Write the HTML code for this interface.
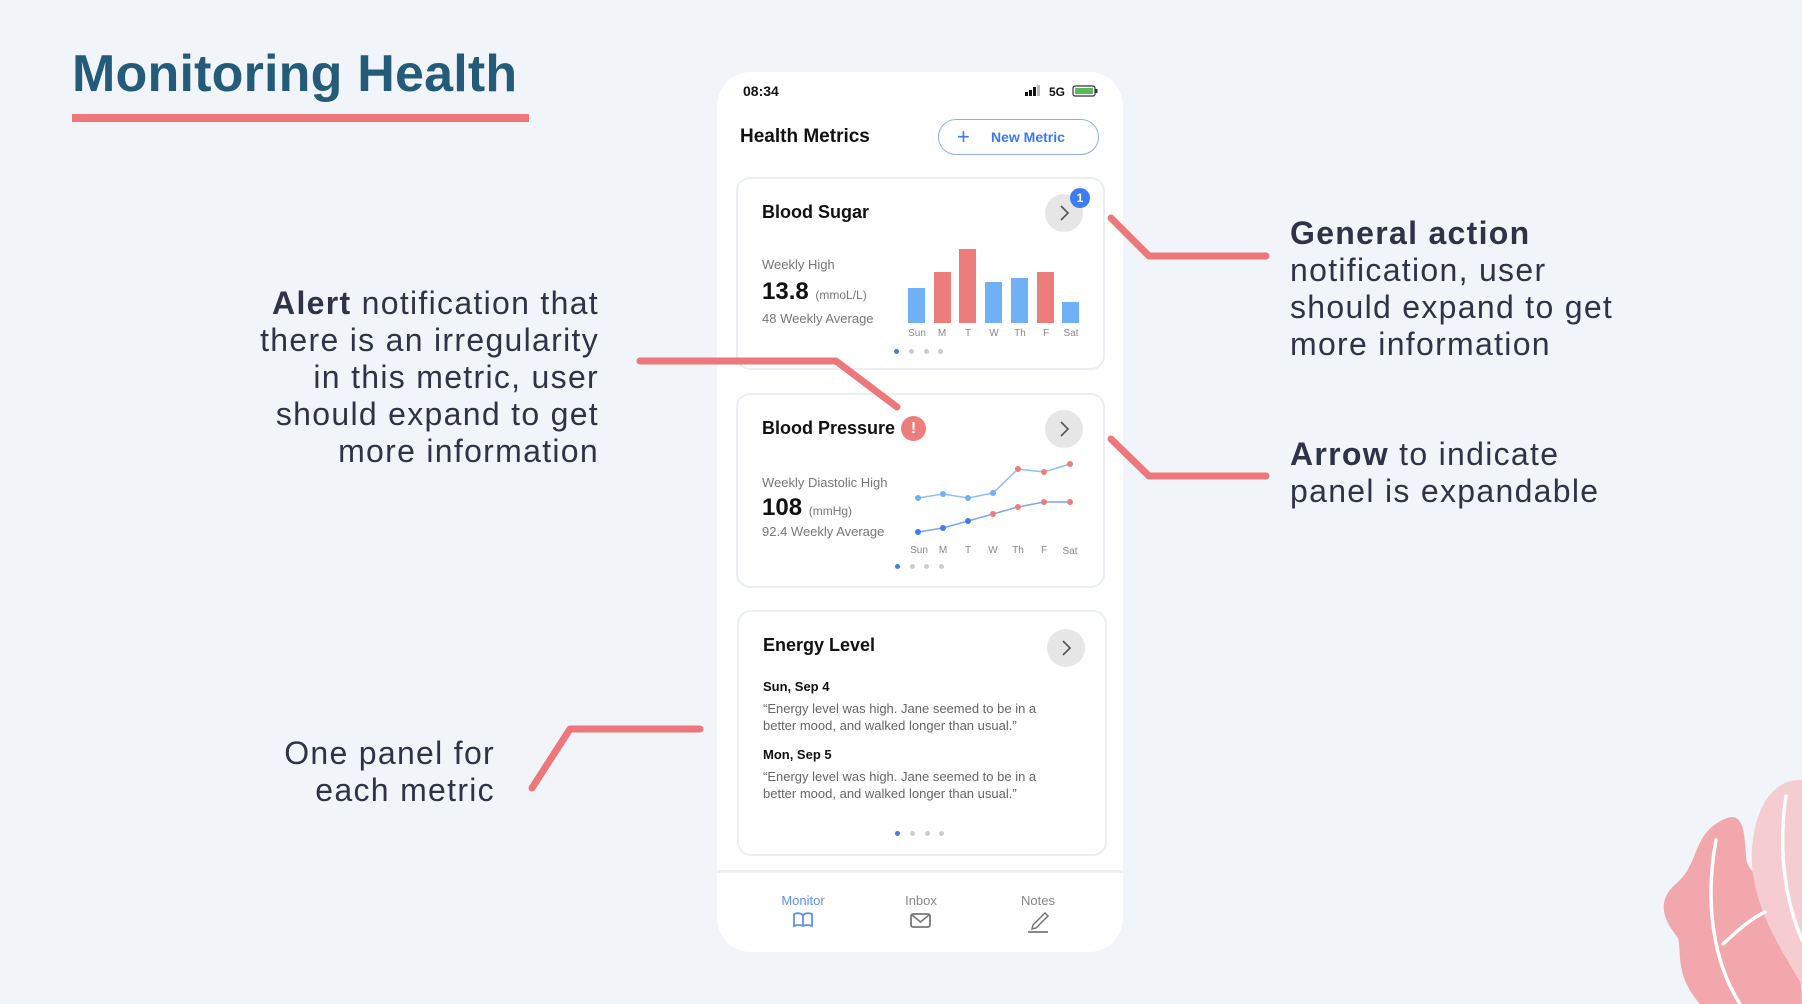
<!DOCTYPE html>
<html><head><meta charset="utf-8"><style>
*{margin:0;padding:0;box-sizing:border-box}
body{width:1802px;height:1004px;background:#f1f5f9;position:relative;overflow:hidden;font-family:"Liberation Sans",sans-serif}
.a{position:absolute;white-space:nowrap}
.ann{font-size:32px;color:#2d3446;line-height:37px;letter-spacing:1.3px}
.ann b{font-weight:bold}
.phone{position:absolute;left:717px;top:72px;width:406px;height:880px;background:#fff;border-radius:34px}
.card{position:absolute;background:#fff;border:2px solid #e9eef7;border-radius:14px}
.ttl{font-weight:bold;font-size:18px;color:#111}
.arr{position:absolute;width:38px;height:38px;border-radius:50%;background:#e6e6e6}
.gray{color:#777;font-size:13px}
.lbl{position:absolute;font-size:10px;color:#888;transform:translateX(-50%)}
.dot{position:absolute;width:5px;height:5px;border-radius:50%;background:#ccc}
</style></head><body>

<div class="a" style="left:72px;top:44px;font-size:52px;font-weight:bold;color:#245b79;letter-spacing:0.2px">Monitoring Health</div>
<div class="a" style="left:72px;top:114px;width:457px;height:8px;background:#ee777b"></div>

<div class="a ann" style="right:1203px;top:285px;text-align:right">
<b>Alert</b> notification that<br>there is an irregularity<br>in this metric, user<br>should expand to get<br>more information</div>

<div class="a ann" style="left:1290px;top:215px"><b>General action</b><br>notification, user<br>should expand to get<br>more information</div>
<div class="a ann" style="left:1290px;top:436px"><b>Arrow</b> to indicate<br>panel is expandable</div>
<div class="a ann" style="right:1307px;top:735px;text-align:right">One panel for<br>each metric</div>

<svg class="a" style="left:0;top:0" width="1802" height="1004">
<path d="M1700,1004 C1675,975 1682,955 1678,938 C1662,918 1656,900 1678,882 C1700,862 1692,832 1727,818 C1748,810 1744,850 1747,862 C1752,878 1770,880 1778,892 C1790,940 1802,960 1802,1004 Z" fill="#f1a7ac"/>
<path d="M1802,780 C1770,778 1750,815 1752,865 C1756,915 1785,955 1802,985 Z" fill="#f5cdd1"/>
<g stroke="#fff" stroke-width="3.5" fill="none" stroke-linecap="round">
<path d="M1716,840 C1705,900 1712,960 1740,1004"/>
<path d="M1723,944 C1738,930 1752,918 1765,912"/>
<path d="M1786,796 C1778,850 1785,900 1802,940"/>
</g>
</svg>

<div class="phone">
 <div class="a" style="left:26px;top:11px;font-size:14px;font-weight:bold;color:#111">08:34</div>
 <svg class="a" style="left:308px;top:12px" width="90" height="14">
  <rect x="0" y="8" width="3" height="4" fill="#111"/><rect x="4" y="6" width="3" height="6" fill="#111"/><rect x="8" y="3" width="3" height="9" fill="#111"/><rect x="12" y="1" width="3" height="11" fill="#bbb"/>
  <text x="24" y="12" font-size="12" font-weight="bold" font-family="Liberation Sans" fill="#111">5G</text>
  <rect x="48" y="2" width="22" height="10" rx="2" fill="none" stroke="#333" stroke-width="1.2"/><rect x="50" y="4" width="18" height="6" fill="#5cb85c"/><rect x="70.5" y="5" width="2" height="4" fill="#333"/>
 </svg>
 <div class="a" style="left:23px;top:54px;font-size:19px;font-weight:bold;color:#111">Health Metrics</div>
 <div class="a" style="left:221px;top:47px;width:161px;height:36px;border:1.5px solid #8eaef0;border-radius:18px;color:#3b7bf0;font-size:14px;font-weight:bold">
  <span class="a" style="left:18px;top:4px;font-size:22px;font-weight:normal">+</span><span class="a" style="left:52px;top:9px">New Metric</span></div>

 <div class="card" style="left:19px;top:105px;width:369px;height:193px">
  <div class="a ttl" style="left:24px;top:23px">Blood Sugar</div>
  <div class="arr" style="left:307px;top:15px"></div>
  <svg class="a" style="left:307px;top:15px" width="38" height="38"><path d="M16,12 L23,19 L16,26" stroke="#555" stroke-width="1.6" fill="none"/></svg>
  <div class="a" style="left:332px;top:9px;width:20px;height:20px;border-radius:50%;background:#3f7cf1;color:#fff;font-size:12px;font-weight:bold;text-align:center;line-height:20px">1</div>
  <div class="a gray" style="left:24px;top:78px">Weekly High</div>
  <div class="a" style="left:24px;top:99px;font-size:24px;font-weight:bold;color:#111">13.8 <span style="font-size:12px;font-weight:normal;color:#777">(mmoL/L)</span></div>
  <div class="a gray" style="left:24px;top:132px">48 Weekly Average</div>
  <svg class="a" style="left:0;top:0" width="369" height="193">
    <rect x="170" y="109" width="17" height="35" fill="#6fb0f7"/>
    <rect x="196" y="93" width="17" height="51" fill="#ec7d7b"/>
    <rect x="221" y="70" width="17" height="74" fill="#ec7d7b"/>
    <rect x="247" y="103" width="17" height="41" fill="#6fb0f7"/>
    <rect x="273" y="99" width="17" height="45" fill="#6fb0f7"/>
    <rect x="299" y="93" width="17" height="51" fill="#ec7d7b"/>
    <rect x="324" y="123" width="17" height="21" fill="#6fb0f7"/>
  </svg>
  <div class="lbl" style="left:179px;top:149px">Sun</div><div class="lbl" style="left:204px;top:149px">M</div><div class="lbl" style="left:230px;top:149px">T</div><div class="lbl" style="left:256px;top:149px">W</div><div class="lbl" style="left:282px;top:149px">Th</div><div class="lbl" style="left:308px;top:149px">F</div><div class="lbl" style="left:333px;top:149px">Sat</div>
  <div class="dot" style="left:156px;top:170px;background:#3f7cf1"></div><div class="dot" style="left:171px;top:170px"></div><div class="dot" style="left:186px;top:170px"></div><div class="dot" style="left:200px;top:170px"></div>
 </div>

 <div class="card" style="left:19px;top:321px;width:369px;height:195px">
  <div class="a ttl" style="left:24px;top:23px">Blood Pressure</div>
  <div class="a" style="left:163px;top:21px;width:25px;height:25px;border-radius:50%;background:#ec7d7b;color:#fff;font-size:16px;font-weight:bold;text-align:center;line-height:25px">!</div>
  <div class="arr" style="left:307px;top:15px"></div>
  <svg class="a" style="left:307px;top:15px" width="38" height="38"><path d="M16,12 L23,19 L16,26" stroke="#555" stroke-width="1.6" fill="none"/></svg>
  <div class="a gray" style="left:24px;top:80px">Weekly Diastolic High</div>
  <div class="a" style="left:24px;top:99px;font-size:24px;font-weight:bold;color:#111">108 <span style="font-size:12px;font-weight:normal;color:#777">(mmHg)</span></div>
  <div class="a gray" style="left:24px;top:129px">92.4 Weekly Average</div>
  <svg class="a" style="left:0;top:0" width="369" height="195">
   <polyline points="180,103 205,99 230,103 255,98 280,74 306,77 332,69" fill="none" stroke="#8cc0f8" stroke-width="1.5"/>
   <polyline points="180,137 205,133 230,126 255,119 280,112 306,107 332,107" fill="none" stroke="#7aa6f5" stroke-width="1.5"/>
   <circle cx="180" cy="103" r="3" fill="#6fb0f7"/><circle cx="205" cy="99" r="3" fill="#6fb0f7"/><circle cx="230" cy="103" r="3" fill="#6fb0f7"/><circle cx="255" cy="98" r="3" fill="#6fb0f7"/>
   <circle cx="280" cy="74" r="3" fill="#ec7d7b"/><circle cx="306" cy="77" r="3" fill="#ec7d7b"/><circle cx="332" cy="69" r="3" fill="#ec7d7b"/>
   <circle cx="180" cy="137" r="3" fill="#3f7cf1"/><circle cx="205" cy="133" r="3" fill="#3f7cf1"/><circle cx="230" cy="126" r="3" fill="#3f7cf1"/>
   <circle cx="255" cy="119" r="3" fill="#ec7d7b"/><circle cx="280" cy="112" r="3" fill="#ec7d7b"/><circle cx="306" cy="107" r="3" fill="#ec7d7b"/><circle cx="332" cy="107" r="3" fill="#ec7d7b"/>
  </svg>
  <div class="lbl" style="left:181px;top:150px">Sun</div><div class="lbl" style="left:205px;top:150px">M</div><div class="lbl" style="left:230px;top:150px">T</div><div class="lbl" style="left:255px;top:150px">W</div><div class="lbl" style="left:280px;top:150px">Th</div><div class="lbl" style="left:306px;top:150px">F</div><div class="lbl" style="left:332px;top:151px">Sat</div>
  <div class="dot" style="left:157px;top:169px;background:#3f7cf1"></div><div class="dot" style="left:172px;top:169px"></div><div class="dot" style="left:186px;top:169px"></div><div class="dot" style="left:201px;top:169px"></div>
 </div>

 <div class="card" style="left:20px;top:538px;width:370px;height:246px">
  <div class="a ttl" style="left:24px;top:23px">Energy Level</div>
  <div class="arr" style="left:308px;top:17px"></div>
  <svg class="a" style="left:308px;top:17px" width="38" height="38"><path d="M16,12 L23,19 L16,26" stroke="#555" stroke-width="1.6" fill="none"/></svg>
  <div class="a" style="left:24px;top:67px;font-size:13px;font-weight:bold;color:#111">Sun, Sep 4</div>
  <div class="a" style="left:24px;top:88px;font-size:13px;color:#666;line-height:17px">“Energy level was high. Jane seemed to be in a<br>better mood, and walked longer than usual.”</div>
  <div class="a" style="left:24px;top:135px;font-size:13px;font-weight:bold;color:#111">Mon, Sep 5</div>
  <div class="a" style="left:24px;top:156px;font-size:13px;color:#666;line-height:17px">“Energy level was high. Jane seemed to be in a<br>better mood, and walked longer than usual.”</div>
  <div class="dot" style="left:156px;top:219px;background:#3f7cf1"></div><div class="dot" style="left:171px;top:219px"></div><div class="dot" style="left:186px;top:219px"></div><div class="dot" style="left:200px;top:219px"></div>
 </div>

 <div class="a" style="left:0;top:798px;width:406px;height:3px;background:#eef0f3"></div>
 <div class="a" style="left:86px;top:821px;font-size:13px;color:#5f8ff2;transform:translateX(-50%)">Monitor</div>
 <div class="a" style="left:204px;top:821px;font-size:13px;color:#888;transform:translateX(-50%)">Inbox</div>
 <div class="a" style="left:321px;top:821px;font-size:13px;color:#888;transform:translateX(-50%)">Notes</div>
 <svg class="a" style="left:0;top:838px" width="406" height="30">
  <path d="M77,4 Q82,2 86,5 Q90,2 95,4 V16 Q90,14 86,16 Q82,14 77,16 Z M86,5 V16" fill="none" stroke="#5f8ff2" stroke-width="1.8"/>
  <rect x="194" y="4" width="19" height="13" rx="2" fill="none" stroke="#777" stroke-width="1.8"/><path d="M195,5 L203.5,12 L212,5" fill="none" stroke="#777" stroke-width="1.6"/>
  <path d="M316,15 L328,3 L331,6 L319,18 L315,19 Z" fill="none" stroke="#777" stroke-width="1.5"/><path d="M311,22 H331" stroke="#777" stroke-width="1.8"/>
 </svg>
</div>

<svg class="a" style="left:0;top:0" width="1802" height="1004">
<g stroke="#ee777b" stroke-width="7" fill="none" stroke-linecap="round" stroke-linejoin="round">
<polyline points="1111,218 1149,256 1266,256"/>
<polyline points="1111,439 1149,476 1266,476"/>
<polyline points="640,361 836,361 897,407"/>
<polyline points="532,788 570,729 700,729"/>
</g>
</svg>
</body></html>
